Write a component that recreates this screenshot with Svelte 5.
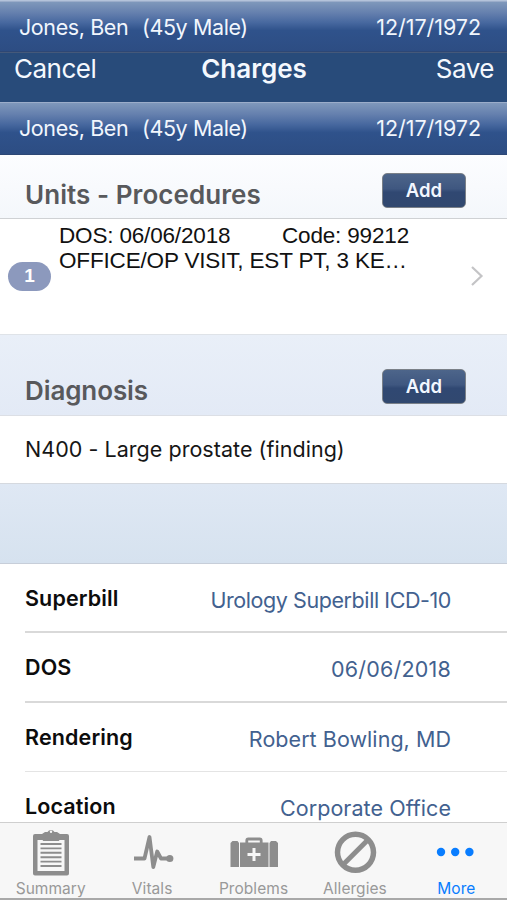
<script lang="ts">
	interface Detail {
		label: string;
		value: string;
		spacing: string;
	}

	const patient = { name: 'Jones, Ben', info: '(45y Male)', dob: '12/17/1972' };

	const details: Detail[] = [
		{ label: 'Superbill', value: 'Urology Superbill ICD-10', spacing: '-0.42px' },
		{ label: 'DOS', value: '06/06/2018', spacing: '0.2px' },
		{ label: 'Rendering', value: 'Robert Bowling, MD', spacing: '0.05px' },
		{ label: 'Location', value: 'Corporate Office', spacing: '0.05px' }
	];

	const tabs = ['Summary', 'Vitals', 'Problems', 'Allergies', 'More'];
	let active = $state('More');
</script>

{#snippet patientBar()}
	<div class="patient-bar">
		<span class="patient-name">{patient.name}</span>
		<span class="patient-info">{patient.info}</span>
		<span class="patient-dob">{patient.dob}</span>
	</div>
{/snippet}

{#snippet tabIcon(name: string)}
	<svg class="tab-icon" width="60" height="56" viewBox="0 0 60 56" aria-hidden="true">
		{#if name === 'Summary'}
			<path d="M14 11h7l3-2h2.500a4 4 0 0 1 7 0H36l3 2h7a2 2 0 0 1 2 2v37.500a2 2 0 0 1-2 2H14a2 2 0 0 1-2-2V13a2 2 0 0 1 2-2z" fill="#8d8d8d" />
			<path d="M16.500 17h27v31h-27z" fill="#f7f7f7" />
			<path d="M21.500 18h17l-3-4h-11z" fill="#8d8d8d" />
			<circle cx="30" cy="8.800" r="1.200" fill="#f7f7f7" />
			<path d="M19.500 21h21M19.500 25.400h21M19.500 29.800h21M19.500 34.200h21M19.500 38.600h21M19.500 43h21" stroke="#8d8d8d" stroke-width="1.900" />
		{:else if name === 'Vitals'}
			<path d="M12 35.500h10.500l5-21.500L31.300 44 35.200 28.500 39 35.500h8" fill="none" stroke="#8d8d8d" stroke-width="3.800" stroke-linejoin="round" />
			<circle cx="47.800" cy="35.500" r="3.600" fill="#8d8d8d" />
		{:else if name === 'Problems'}
			<path d="M6.500 20l2-2h5l1.500 2v24H6.500zM45.500 20l1.500-2h5l2 2v24h-8.500z" fill="#8d8d8d" />
			<path d="M16 19.500h28.500V44H16z" fill="#8d8d8d" />
			<path d="M22.800 20v-2.500q0-1.500 1.500-1.500h11.400q1.500 0 1.500 1.500V20" fill="none" stroke="#8d8d8d" stroke-width="2.800" />
			<path d="M30 25v13M23.500 31.500h13" stroke="#f7f7f7" stroke-width="3" />
		{:else if name === 'Allergies'}
			<circle cx="30.500" cy="29.300" r="18" fill="none" stroke="#8d8d8d" stroke-width="5.500" />
			<path d="M43 16.800l-25 25" stroke="#8d8d8d" stroke-width="5" />
		{:else}
			<g fill="#097dff">
				<circle cx="15" cy="29" r="4.200" />
				<circle cx="29.200" cy="29" r="4.200" />
				<circle cx="43.400" cy="29" r="4.200" />
			</g>
		{/if}
	</svg>
{/snippet}

<div class="screen">
	<div class="status">{@render patientBar()}</div>

	<header class="nav">
		<span class="nav-cancel">Cancel</span>
		<h1 class="nav-title">Charges</h1>
		<span class="nav-save">Save</span>
	</header>

	{@render patientBar()}

	<main class="content">
		<section class="section-head procedures">
			<h2 class="units-title">Units - Procedures</h2>
			<button class="add">Add</button>
		</section>

		<div class="procedure">
			<span class="count">1</span>
			<div class="procedure-text">
				<div class="procedure-line">
					<span class="dos">DOS: 06/06/2018</span>
					<span class="code">Code: 99212</span>
				</div>
				<div class="description">OFFICE/OP VISIT, EST PT, 3 KE…</div>
			</div>
			<svg class="chevron" width="14" height="22" viewBox="0 0 14 22" aria-hidden="true">
				<path d="M2 2l9.500 9L2 20" fill="none" stroke="#c4c4c6" stroke-width="2.200" />
			</svg>
		</div>

		<section class="section-head diagnosis">
			<h2 class="diagnosis-title">Diagnosis</h2>
			<button class="add">Add</button>
		</section>
		<div class="diagnosis-row"><span>N400 - Large prostate (finding)</span></div>

		<div class="spacer"></div>

		<div class="details">
			{#each details as item (item.label)}
				<div class="detail">
					<span class="detail-label">{item.label}</span>
					<span class="detail-value" style:letter-spacing={item.spacing}>{item.value}</span>
				</div>
			{/each}
		</div>
	</main>

	<nav class="tabs">
		{#each tabs as tab (tab)}
			<button class="tab" class:active={active === tab} onclick={() => (active = tab)}>
				{@render tabIcon(tab)}
				<span class="tab-label">{tab}</span>
			</button>
		{/each}
	</nav>
</div>

<style>
	:global(body) {
		margin: 0;
	}

	.screen {
		display: flex;
		flex-direction: column;
		box-sizing: border-box;
		width: 507px;
		height: 900px;
		overflow: hidden;
		background: #fff;
		font-family: Inter, 'Liberation Sans', sans-serif;
		white-space: nowrap;
	}

	button {
		font-family: inherit;
		cursor: pointer;
	}

	h1,
	h2 {
		margin: 0;
	}

	.status {
		flex: none;
		box-sizing: border-box;
		height: 53px;
		padding-top: 1px;
		overflow: hidden;
		background: #b4c3da;
		border-bottom: 1px solid #45597a;
	}

	.status .patient-bar {
		height: 51px;
		padding-bottom: 0;
	}

	.patient-bar {
		display: flex;
		flex: none;
		align-items: center;
		box-sizing: border-box;
		height: 53px;
		padding: 0 26px 2px 19px;
		border-top: 1px solid #9badca;
		border-bottom: 1px solid #2d4775;
		background: linear-gradient(#7f98bb 0%, #6580ae 22%, #47689f 42%, #2f528b 58%, #2d4d83 100%);
		color: #f1f6fd;
		font-size: 21.500px;
		line-height: 26px;
		letter-spacing: -0.400px;
	}

	.patient-name {
		width: 123px;
	}

	.patient-dob {
		margin-left: auto;
		letter-spacing: -0.050px;
	}

	.nav {
		display: grid;
		flex: none;
		grid-template-columns: 1fr auto 1fr;
		height: 49px;
		padding: 0 13px 0 14px;
		background: #284b7a;
		color: #f4f8fe;
		font-size: 26px;
		line-height: 31px;
		letter-spacing: -0.500px;
	}

	.nav-title {
		font-size: 26px;
		font-weight: 600;
		letter-spacing: 0;
	}

	.nav-save {
		text-align: right;
	}

	.content {
		flex: 1;
		min-height: 0;
		overflow: hidden;
	}

	.section-head {
		display: flex;
		justify-content: space-between;
		box-sizing: border-box;
		padding: 0 41px 0 25px;
		border-bottom: 1px solid #dcdfe5;
		color: #58595c;
	}

	.section-head h2 {
		padding-top: 6px;
		font-size: 26px;
		font-weight: 600;
		line-height: 32px;
	}

	.section-head .units-title {
		letter-spacing: 0.060px;
	}

	.section-head .diagnosis-title {
		letter-spacing: -0.100px;
	}

	.procedures {
		height: 64px;
		padding-top: 18px;
		border-color: #cfd1d4;
		background: linear-gradient(#fcfdff, #f4f7fb);
	}

	.diagnosis {
		height: 82px;
		padding-top: 34px;
		border-top: 1px solid #dfe3e8;
		background: linear-gradient(#e9eff8, #e3eaf6);
	}

	.add {
		box-sizing: border-box;
		width: 84px;
		height: 35px;
		padding: 0;
		border: 1px solid #7a8088;
		border-radius: 5px;
		background: linear-gradient(#4d658a 0%, #3f5780 45%, #304872 55%, #31486f 100%);
		color: #f2f7ff;
		font-size: 18.500px;
		font-weight: 600;
		line-height: 33px;
	}

	.procedure {
		display: flex;
		align-items: flex-start;
		box-sizing: border-box;
		height: 115px;
		padding: 4px 23px 0 8px;
		background: #fff;
		color: #111;
		font-family: 'Liberation Sans', Arial, sans-serif;
		font-size: 22.500px;
		line-height: 25px;
		letter-spacing: -0.170px;
	}

	.count {
		width: 43px;
		height: 29px;
		margin: 39px 8px 0 0;
		border-radius: 15px;
		background: #8c99bd;
		color: #fff;
		font-size: 19px;
		font-weight: 700;
		line-height: 27px;
		text-align: center;
	}

	.procedure-line {
		display: flex;
	}

	.dos {
		width: 223px;
	}

	.chevron {
		margin: 42px 0 0 auto;
	}

	.diagnosis-row {
		box-sizing: border-box;
		height: 68px;
		padding-left: 25px;
		border-bottom: 1px solid #d5d9df;
		color: #161616;
		font-size: 21.500px;
		line-height: 67px;
		letter-spacing: 0.040px;
	}

	.spacer {
		box-sizing: border-box;
		height: 80px;
		border-bottom: 1px solid #c7ced9;
		background: linear-gradient(#dfe8f4, #d6e2ef);
	}

	.details {
		padding-left: 25px;
	}

	.detail {
		display: flex;
		justify-content: space-between;
		box-sizing: border-box;
		height: 69.400px;
		padding-right: 56px;
		border-bottom: 2px solid #d9d9d9;
		line-height: 69px;
	}

	.detail:nth-child(3) {
		border-bottom: 1px solid #e4e4e4;
	}

	.detail-label {
		color: #0c0c0c;
		font-size: 21.500px;
		font-weight: 600;
		letter-spacing: 0.130px;
	}

	.detail-value {
		padding-top: 2px;
		color: #42618f;
		font-size: 21.500px;
	}

	.tabs {
		display: flex;
		flex: none;
		box-sizing: border-box;
		height: 78px;
		border-top: 1px solid #cfcfcf;
		border-bottom: 2px solid #a9a9a9;
		background: #f7f7f7;
	}

	.tab {
		display: flex;
		flex: 1;
		flex-direction: column;
		align-items: center;
		padding: 0;
		border: 0;
		background: none;
		color: #999;
	}

	.tab-icon {
		display: block;
		flex: none;
	}

	.tab-label {
		font-size: 15.500px;
		line-height: 19px;
		letter-spacing: 0.050px;
	}

	.tab.active {
		color: #097dff;
	}
</style>
